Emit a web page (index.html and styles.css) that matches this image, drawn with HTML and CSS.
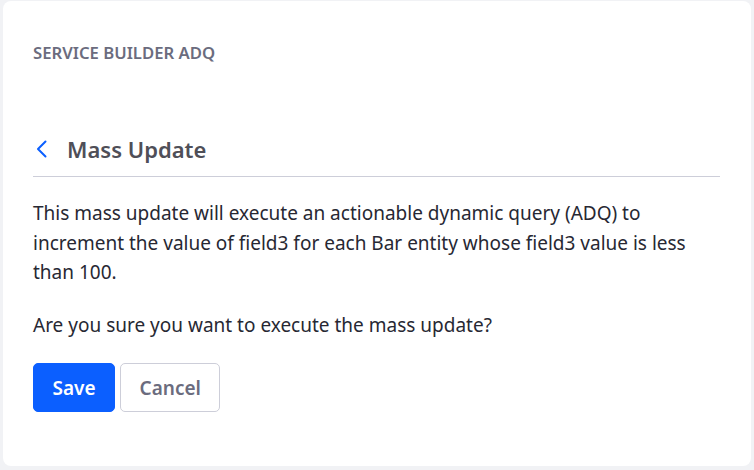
FILE: index.html
```html
<!DOCTYPE html>
<html lang="en">
<head>
    <meta charset="UTF-8">
    <meta name="viewport" content="width=device-width, initial-scale=1.0">
    <title>Mass Update</title>
    <link rel="stylesheet" href="styles.css">
</head>
<body>
    <div class="card">
        <div class="portlet-title">SERVICE BUILDER ADQ</div>
        <div class="page-header">
            <a href="#" class="back-link">
                <svg width="14" height="20" viewBox="0 0 14 20"><path d="M10.5 2.5 L3 10 L10.5 17.5" fill="none" stroke="#0b5fff" stroke-width="2" stroke-linecap="round" stroke-linejoin="round"/></svg>
            </a>
            <h2>Mass Update</h2>
        </div>
        <p class="description">This mass update will execute an actionable dynamic query (ADQ) to increment the value of field3 for each Bar entity whose field3 value is less than 100.</p>
        <p class="question">Are you sure you want to execute the mass update?</p>
        <div class="actions">
            <button class="btn btn-primary">Save</button>
            <button class="btn btn-secondary">Cancel</button>
        </div>
    </div>
</body>
</html>
```

FILE: styles.css
```css
body {
    margin: 0;
    padding: 1px 3px 4px 3px;
    background-color: #f1f2f5;
    font-family: "Noto Sans", sans-serif;
    color: #272833;
}

/* Carta principal */
.card {
    background-color: white;
    border-radius: 8px;
    height: 465px;
    box-sizing: border-box;
    padding: 40px 31px 0 30px;
}

.portlet-title {
    color: #6b6c7e;
    font-size: 16.7px;
    font-weight: 600;
    line-height: 24px;
}

/* Cabeçalho da página */
.page-header {
    display: flex;
    align-items: center;
    gap: 18px;
    margin-top: 69px;
    padding: 0 0 12px 2px;
    border-bottom: 1px solid #cdced9;
}

.back-link {
    display: flex;
}

.page-header h2 {
    margin: 0;
    font-size: 22px;
    font-weight: 600;
    line-height: 30px;
    color: #4f4f58;
}

.description {
    margin: 22px 0 0 0;
    font-size: 19px;
    line-height: 29.5px;
}

.question {
    margin: 23px 0 0 0;
    font-size: 19px;
    line-height: 29.5px;
}

.actions {
    display: flex;
    gap: 5px;
    margin-top: 23px;
}

.btn {
    font-family: inherit;
    font-size: 19px;
    font-weight: 600;
    height: 49px;
    padding: 0 18.5px;
    border-radius: 5px;
    cursor: pointer;
}

.btn-primary {
    background-color: #0b5fff;
    border: 1px solid #0b5fff;
    color: white;
}

.btn-secondary {
    background-color: white;
    border: 1px solid #cdced9;
    color: #6b6c7e;
}
```
